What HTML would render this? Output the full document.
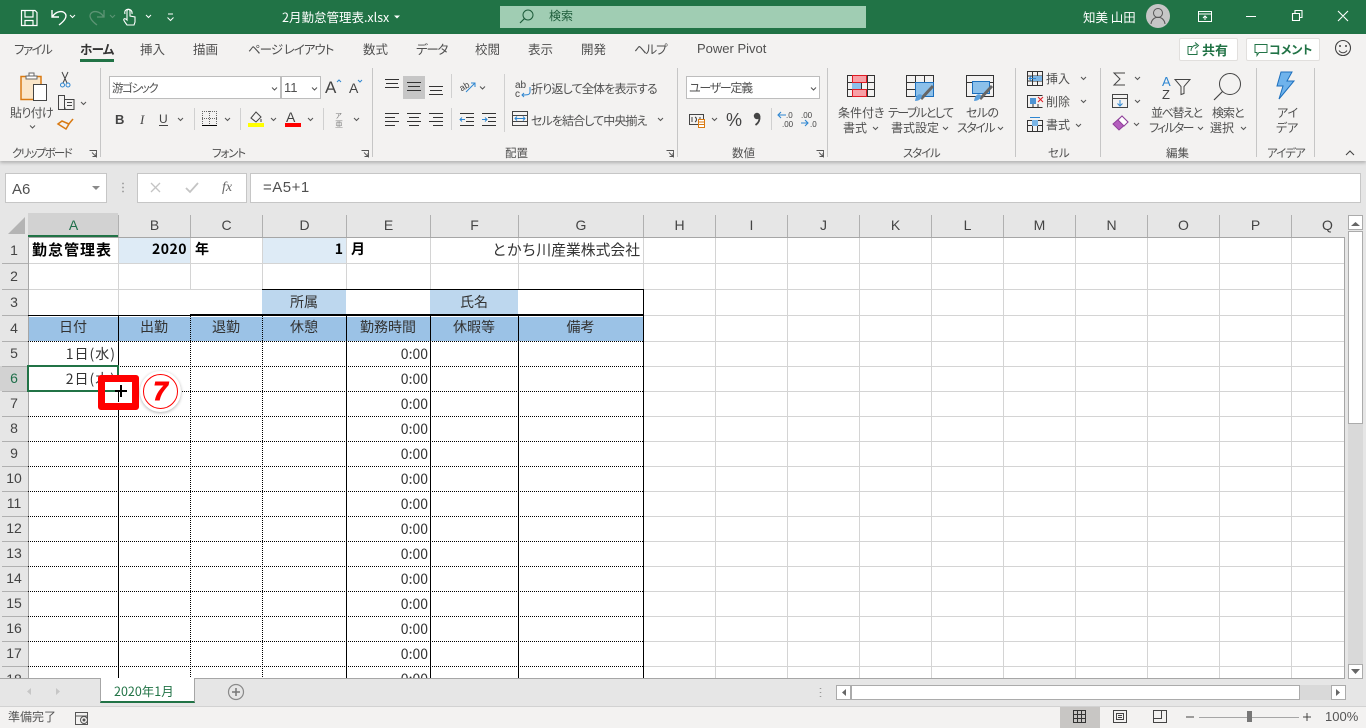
<!DOCTYPE html>
<html lang="ja"><head><meta charset="utf-8"><title>2月勤怠管理表.xlsx</title>
<style>
*{box-sizing:border-box}
html,body{margin:0;padding:0;width:1366px;height:728px;overflow:hidden;background:#e6e6e6}
body{position:relative;font-family:"Liberation Sans","Noto Sans CJK JP",sans-serif;color:#444}
.a{position:absolute}
.t{position:absolute;white-space:nowrap;font-family:"Noto Sans CJK JP",sans-serif;font-feature-settings:"palt";font-size:12px;line-height:16px;color:#505050}
.c{position:absolute;white-space:nowrap;font-family:"Noto Sans CJK JP",sans-serif;font-size:14px;line-height:25px;color:#333;padding:0 2px}
.r{text-align:right}.m{text-align:center}.b{font-weight:700;color:#000}
.ch{position:absolute;top:213px;height:24px;line-height:25px;text-align:center;font-size:14px;color:#444;font-family:"Liberation Sans",sans-serif;padding-left:1px}
.rh{position:absolute;left:0;width:28px;text-align:center;font-size:14px;color:#444;font-family:"Liberation Sans",sans-serif}
svg{position:absolute;left:0;top:0;overflow:visible}
</style></head><body>

<!-- title bar -->
<div class="a" style="left:0;top:0;width:1366px;height:34px;background:#217346"></div>
<div class="t" style="left:282px;top:9px;color:#fff;font-size:12.5px;font-feature-settings:normal">2月勤怠管理表.xlsx</div>
<div class="a" style="left:500px;top:6px;width:366px;height:22px;background:#a0cdb3"></div>
<div class="t" style="left:549px;top:8px;color:#1d5c3a;font-size:12px">検索</div>
<div class="t" style="left:1083px;top:9px;color:#fff;font-size:12.5px">知美 山田</div>

<!-- ribbon -->
<div class="a" style="left:0;top:34px;width:1366px;height:127px;background:#f3f2f1;box-shadow:0 2px 3px rgba(0,0,0,.22)"></div>

<div class="t" style="left:14px;top:41px;font-size:12.5px;letter-spacing:-1.5px">ファイル</div>
<div class="t" style="left:80px;top:41px;font-size:12.5px;font-weight:700;color:#333;letter-spacing:-.7px">ホーム</div>
<div class="a" style="left:80px;top:59px;width:34px;height:3px;background:#217346"></div>
<div class="t" style="left:140px;top:41px;font-size:12.5px">挿入</div>
<div class="t" style="left:193px;top:41px;font-size:12.5px">描画</div>
<div class="t" style="left:248px;top:41px;font-size:12.5px;letter-spacing:-1px">ページ レイアウト</div>
<div class="t" style="left:363px;top:41px;font-size:12.5px">数式</div>
<div class="t" style="left:416px;top:41px;font-size:12.5px;letter-spacing:-1.3px">データ</div>
<div class="t" style="left:475px;top:41px;font-size:12.5px">校閲</div>
<div class="t" style="left:528px;top:41px;font-size:12.5px">表示</div>
<div class="t" style="left:581px;top:41px;font-size:12.5px">開発</div>
<div class="t" style="left:634px;top:41px;font-size:12.5px;letter-spacing:-1.2px">ヘルプ</div>
<div class="t" style="left:697px;top:41px;font-size:13px;font-family:'Liberation Sans',sans-serif">Power Pivot</div>

<div class="a" style="left:1179px;top:38px;width:59px;height:23px;background:#fff;border:1px solid #e1dfdd;border-radius:2px"></div>
<div class="t" style="left:1202px;top:42px;font-weight:700;font-size:13px;color:#217346">共有</div>
<div class="a" style="left:1246px;top:38px;width:74px;height:23px;background:#fff;border:1px solid #e1dfdd;border-radius:2px"></div>
<div class="t" style="left:1269px;top:42px;font-weight:700;color:#217346">コメント</div>

<!-- ribbon boxes -->
<div class="a" style="left:109px;top:76px;width:172px;height:23px;background:#fff;border:1px solid #bdbdbd"></div>
<div class="a" style="left:281px;top:76px;width:40px;height:23px;background:#fff;border:1px solid #bdbdbd"></div>
<div class="a" style="left:686px;top:76px;width:134px;height:23px;background:#fff;border:1px solid #bdbdbd"></div>
<div class="a" style="left:403px;top:76px;width:22px;height:23px;background:#c6c6c6"></div>
<div class="t" style="left:112px;top:80px;font-size:11.5px;letter-spacing:-1.4px">游ゴシック</div>
<div class="t" style="left:284px;top:80px;font-size:13px;font-family:'Liberation Sans',sans-serif">11</div>
<div class="t" style="left:689px;top:80px;font-size:12px;letter-spacing:-1.3px">ユーザー定義</div>

<div class="t" style="left:10px;top:105px;letter-spacing:-.7px">貼り付け</div>
<div class="t" style="left:531px;top:81px;font-size:12px;letter-spacing:-.8px">折り返して全体を表示する</div>
<div class="t" style="left:531px;top:113px;font-size:12px;letter-spacing:-.9px">セルを結合して中央揃え</div>
<div class="t" style="left:838px;top:105px">条件付き</div>
<div class="t" style="left:843px;top:120px">書式</div>
<div class="t" style="left:888px;top:105px;letter-spacing:-1.5px">テーブルとして</div>
<div class="t" style="left:891px;top:120px">書式設定</div>
<div class="t" style="left:966px;top:105px;letter-spacing:-.6px">セルの</div>
<div class="t" style="left:957px;top:120px;letter-spacing:-1.5px">スタイル</div>
<div class="t" style="left:1046px;top:71px">挿入</div>
<div class="t" style="left:1046px;top:94px">削除</div>
<div class="t" style="left:1046px;top:117px">書式</div>
<div class="t" style="left:1151px;top:105px;letter-spacing:-1.4px">並べ替えと</div>
<div class="t" style="left:1149px;top:120px;letter-spacing:-1.8px">フィルター</div>
<div class="t" style="left:1212px;top:105px;letter-spacing:-1px">検索と</div>
<div class="t" style="left:1210px;top:120px">選択</div>
<div class="t" style="left:1277px;top:105px">アイ</div>
<div class="t" style="left:1276px;top:120px">デア</div>

<div class="t" style="left:12px;top:145px;font-size:11.5px;letter-spacing:-1.7px">クリップボード</div>
<div class="t" style="left:212px;top:145px;font-size:11.5px;letter-spacing:-1.2px">フォント</div>
<div class="t" style="left:505px;top:145px;font-size:11.5px">配置</div>
<div class="t" style="left:732px;top:145px;font-size:11.5px">数値</div>
<div class="t" style="left:903px;top:145px;font-size:11.5px;letter-spacing:-1.2px">スタイル</div>
<div class="t" style="left:1048px;top:145px;font-size:11.5px">セル</div>
<div class="t" style="left:1166px;top:145px;font-size:11.5px">編集</div>
<div class="t" style="left:1267px;top:145px;font-size:11.5px;letter-spacing:-1px">アイデア</div>

<!-- formula bar -->
<div class="a" style="left:5px;top:173px;width:102px;height:30px;background:#fff;border:1px solid #c6c6c6"></div>
<div class="t" style="left:12px;top:182px;font-size:15px;font-family:'Liberation Sans',sans-serif">A6</div>
<div class="a" style="left:137px;top:173px;width:110px;height:30px;background:#fff;border:1px solid #c6c6c6"></div>
<div class="a" style="left:250px;top:173px;width:1111px;height:30px;background:#fff;border:1px solid #c6c6c6"></div>
<div class="t" style="left:263px;top:180px;font-size:15px;font-family:'Liberation Sans',sans-serif;letter-spacing:.5px">=A5+1</div>

<!-- sheet -->
<div class="a" style="left:0;top:213px;width:1345px;height:465px;background:#e6e6e6"></div>
<div class="a" style="left:28px;top:213px;width:90px;height:24px;background:#d2d2d2"></div>
<div class="a" style="left:0;top:366px;width:28px;height:25px;background:#d2d2d2"></div>
<div class="a" style="left:28px;top:237px;width:1316px;height:441px;background:#fff"></div>
<div class="a" style="left:118px;top:237px;width:72px;height:26px;background:#deebf6"></div>
<div class="a" style="left:262px;top:237px;width:84px;height:26px;background:#deebf6"></div>
<div class="a" style="left:262px;top:290px;width:84px;height:25px;background:#bdd7ee"></div>
<div class="a" style="left:430px;top:290px;width:88px;height:25px;background:#bdd7ee"></div>
<div class="a" style="left:28px;top:317px;width:615px;height:24px;background:#9bc2e6"></div>

<svg width="1366" height="728" shape-rendering="crispEdges">
<g stroke="#d4d4d4" stroke-width="1">
<path d="M28.500 263.500H1344M28.500 289.500H1344M644 315.500H1344M644 341.500H1344M644 366.500H1344M644 391.500H1344M644 416.500H1344M644 441.500H1344M644 466.500H1344M644 491.500H1344M644 516.500H1344M644 541.500H1344M644 566.500H1344M644 591.500H1344M644 616.500H1344M644 641.500H1344M644 666.500H1344"/>
<path d="M118.500 237V315M190.500 237V290M262.500 237V290M346.500 237V290M430.500 237V290M518.500 237V290M643.500 237V290M715.500 237V678M787.500 237V678M859.500 237V678M931.500 237V678M1003.500 237V678M1075.500 237V678M1147.500 237V678M1219.500 237V678M1291.500 237V678"/>
</g>
<!-- header dividers -->
<g stroke="#b0b0b0" stroke-width="1">
<path d="M118.500 215V237M190.500 215V237M262.500 215V237M346.500 215V237M430.500 215V237M518.500 215V237M643.500 215V237M715.500 215V237M787.500 215V237M859.500 215V237M931.500 215V237M1003.500 215V237M1075.500 215V237M1147.500 215V237M1219.500 215V237M1291.500 215V237"/>
<path d="M2 263.500H28M2 289.500H28M2 315.500H28M2 341.500H28M2 366.500H28M2 391.500H28M2 416.500H28M2 441.500H28M2 466.500H28M2 491.500H28M2 516.500H28M2 541.500H28M2 566.500H28M2 591.500H28M2 616.500H28M2 641.500H28M2 666.500H28"/>
</g>
<path d="M28 237.500H1345M28.500 237V678M1344.500 237V678" stroke="#a6a6a6" fill="none"/>
<path d="M28 236H118" stroke="#217346" stroke-width="2"/>
<path d="M25 217V234H8Z" fill="#b4b4b4" shape-rendering="auto"/>
<!-- black table borders -->
<g stroke="#000" stroke-width="1" fill="none">
<path d="M262 289.500H644M190 314.500H644M28 315.500H644M118.500 316V678M346.500 316V678M430.500 316V678M518.500 316V678M643.500 289V678"/>
<g stroke-dasharray="1 1">
<path d="M190.500 316V678M262.500 316V678"/>
<path d="M28 341.500H644M28 366.500H644M28 391.500H644M28 416.500H644M28 441.500H644M28 466.500H644M28 491.500H644M28 516.500H644M28 541.500H644M28 566.500H644M28 591.500H644M28 616.500H644M28 641.500H644M28 666.500H644"/>
</g>
</g>
</svg>

<!-- headers -->
<div class="ch" style="left:28px;width:90px;color:#1f6f4a">A</div>
<div class="ch" style="left:118px;width:72px">B</div>
<div class="ch" style="left:190px;width:72px">C</div>
<div class="ch" style="left:262px;width:84px">D</div>
<div class="ch" style="left:346px;width:84px">E</div>
<div class="ch" style="left:430px;width:88px">F</div>
<div class="ch" style="left:518px;width:125px">G</div>
<div class="ch" style="left:643px;width:72px">H</div>
<div class="ch" style="left:715px;width:72px">I</div>
<div class="ch" style="left:787px;width:72px">J</div>
<div class="ch" style="left:859px;width:72px">K</div>
<div class="ch" style="left:931px;width:72px">L</div>
<div class="ch" style="left:1003px;width:72px">M</div>
<div class="ch" style="left:1075px;width:72px">N</div>
<div class="ch" style="left:1147px;width:72px">O</div>
<div class="ch" style="left:1219px;width:72px">P</div>
<div class="ch" style="left:1291px;width:72px">Q</div>

<div class="rh" style="top:238px;line-height:25px">1</div>
<div class="rh" style="top:264px;line-height:25px">2</div>
<div class="rh" style="top:290px;line-height:25px">3</div>
<div class="rh" style="top:316px;line-height:25px">4</div>
<div class="rh" style="top:341px;line-height:25px">5</div>
<div class="rh" style="top:366px;line-height:25px;color:#1f6f4a">6</div>
<div class="rh" style="top:391px;line-height:25px">7</div>
<div class="rh" style="top:416px;line-height:25px">8</div>
<div class="rh" style="top:441px;line-height:25px">9</div>
<div class="rh" style="top:466px;line-height:25px">10</div>
<div class="rh" style="top:491px;line-height:25px">11</div>
<div class="rh" style="top:516px;line-height:25px">12</div>
<div class="rh" style="top:541px;line-height:25px">13</div>
<div class="rh" style="top:566px;line-height:25px">14</div>
<div class="rh" style="top:591px;line-height:25px">15</div>
<div class="rh" style="top:616px;line-height:25px">16</div>
<div class="rh" style="top:641px;line-height:25px">17</div>
<div class="a" style="left:0;top:666px;width:28px;height:12px;overflow:hidden"><div class="rh" style="top:1px;line-height:25px">18</div></div>

<!-- cells -->
<div class="c b" style="left:30px;top:237px;font-size:15px;letter-spacing:1px">勤怠管理表</div>
<div class="c r b" style="left:118px;top:237px;width:72px;padding-right:3px;letter-spacing:.5px">2020</div>
<div class="c b" style="left:193px;top:237px">年</div>
<div class="c r b" style="left:262px;top:237px;width:84px;padding-right:3px">1</div>
<div class="c b" style="left:349px;top:237px">月</div>
<div class="c r" style="left:430px;top:237px;width:213px;font-size:14.8px;padding-right:3px">とかち川産業株式会社</div>
<div class="c m" style="left:262px;top:290px;width:84px">所属</div>
<div class="c m" style="left:430px;top:290px;width:88px">氏名</div>
<div class="c m" style="left:28px;top:315px;width:90px">日付</div>
<div class="c m" style="left:118px;top:315px;width:72px">出勤</div>
<div class="c m" style="left:190px;top:315px;width:72px">退勤</div>
<div class="c m" style="left:262px;top:315px;width:84px">休憩</div>
<div class="c m" style="left:346px;top:315px;width:84px">勤務時間</div>
<div class="c m" style="left:430px;top:315px;width:88px">休暇等</div>
<div class="c m" style="left:518px;top:315px;width:125px">備考</div>
<div class="c r" style="left:28px;top:342px;width:90px;letter-spacing:1px">1日(水)</div>
<div class="c r" style="left:28px;top:367px;width:90px;letter-spacing:1px">2日(木)</div>
<div class="c r" style="left:346px;top:342px;width:84px">0:00</div>
<div class="c r" style="left:346px;top:367px;width:84px">0:00</div>
<div class="c r" style="left:346px;top:392px;width:84px">0:00</div>
<div class="c r" style="left:346px;top:417px;width:84px">0:00</div>
<div class="c r" style="left:346px;top:442px;width:84px">0:00</div>
<div class="c r" style="left:346px;top:467px;width:84px">0:00</div>
<div class="c r" style="left:346px;top:492px;width:84px">0:00</div>
<div class="c r" style="left:346px;top:517px;width:84px">0:00</div>
<div class="c r" style="left:346px;top:542px;width:84px">0:00</div>
<div class="c r" style="left:346px;top:567px;width:84px">0:00</div>
<div class="c r" style="left:346px;top:592px;width:84px">0:00</div>
<div class="c r" style="left:346px;top:617px;width:84px">0:00</div>
<div class="c r" style="left:346px;top:642px;width:84px">0:00</div>
<div class="c r" style="left:346px;top:667px;width:84px;height:11px;overflow:hidden">0:00</div>

<!-- selection & callout -->
<div class="a" style="left:27px;top:365px;width:92px;height:27px;border:2px solid #217346"></div>
<div class="a" style="left:98px;top:375px;width:41px;height:35px;background:#fff;border:7px solid #f00;border-radius:3px"></div>
<div class="a" style="left:105px;top:390px;width:14px;height:2px;background:#217346"></div>
<div class="a" style="left:118px;top:392px;width:1px;height:10px;background:#000"></div>
<div class="a" style="left:115px;top:390px;width:12px;height:2px;background:#000"></div>
<div class="a" style="left:120px;top:385px;width:2px;height:12px;background:#000"></div>
<div class="a" style="left:140px;top:371px;width:41px;height:41px;background:#fff;border-radius:50%;box-shadow:0 1px 3px rgba(0,0,0,.3)"></div>
<div class="a" style="left:143px;top:374px;width:35px;height:35px;border:1.5px solid #f00;border-radius:50%"></div>
<div class="a" style="left:143px;top:374px;width:35px;height:35px;text-align:center;line-height:35px;font-family:'Liberation Sans',sans-serif;font-weight:700;font-style:italic;font-size:26px;color:#f00;-webkit-text-stroke:1px #f00">7</div>

<!-- scrollbars -->
<div class="a" style="left:1345px;top:213px;width:21px;height:465px;background:#e6e6e6"></div>
<div class="a" style="left:1348px;top:424px;width:15px;height:240px;background:#d9d9d9"></div>
<div class="a" style="left:1348px;top:215px;width:15px;height:15px;background:#fff;border:1px solid #ababab"></div>
<div class="a" style="left:1348px;top:231px;width:15px;height:193px;background:#fff;border:1px solid #ababab"></div>
<div class="a" style="left:1348px;top:664px;width:15px;height:15px;background:#fff;border:1px solid #ababab"></div>

<!-- tabs -->
<div class="a" style="left:0;top:678px;width:1345px;height:28px;background:#e6e6e6;border-top:1px solid #a6a6a6"></div>
<div class="a" style="left:100px;top:678px;width:95px;height:25px;background:#fff;border-left:1px solid #a6a6a6;border-right:1px solid #a6a6a6;border-bottom:2px solid #217346"></div>
<div class="t" style="left:114px;top:683px;font-size:12.5px;color:#217346;font-feature-settings:normal">2020年1月</div>
<div class="a" style="left:851px;top:685px;width:449px;height:15px;background:#fff;border:1px solid #ababab"></div>
<div class="a" style="left:1300px;top:685px;width:31px;height:15px;background:#d9d9d9"></div>
<div class="a" style="left:836px;top:685px;width:15px;height:15px;background:#fff;border:1px solid #ababab"></div>
<div class="a" style="left:1331px;top:685px;width:15px;height:15px;background:#fff;border:1px solid #ababab"></div>

<!-- status -->
<div class="a" style="left:0;top:706px;width:1366px;height:22px;background:#f3f2f1;border-top:1px solid #d2d2d2"></div>
<div class="a" style="left:1060px;top:707px;width:40px;height:21px;background:#c8c6c4"></div>
<div class="t" style="left:8px;top:709px;font-size:12px;color:#555;font-feature-settings:normal">準備完了</div>
<div class="t" style="left:1325px;top:709px;font-size:13px;color:#555;font-family:'Liberation Sans',sans-serif">100%</div>

<!-- icons -->
<svg width="1366" height="728" fill="none">
<!-- title bar -->
<g stroke="#fff" stroke-width="1.200">
<path d="M21.500 10.500H35l2 2v13H21.500ZM25 10.500V17H33V10.500M25 25.500V20.500H33V25.500"/>
<path d="M52 10V17H59M52.500 16.500C56 11 63 10 65.500 14C67.500 18 63 22 59 25" stroke-width="1.400"/>
<path d="M70 15l2.500 2.500 2.500-2.500M146 15l2.500 2.500 2.500-2.500" stroke-width="1"/>
<path d="M127 25c-2-3-4-5-3-6 1-1 3 1 3 1V11c0-2 3-2 3 0v5l5 1v5l-1 3ZM125 14c-2-6 8-7 7 0" stroke-width="1.100"/>
<path d="M168 14h5M167.500 17.500l3 3 3-3" stroke-width="1"/>
<path d="M1198.500 11.500H1211.500V21.500H1198.500ZM1198.500 14H1211.500M1205 20V16M1203 18l2-2 2 2" stroke-width="1"/>
<path d="M1246 16.500h10M1292.500 13.500h7v7h-7ZM1295 13v-2.500h7v7h-2.500M1338 11l10 10M1348 11l-10 10" stroke-width="1.100"/>
</g>
<path d="M394 15.500h6l-3 3Z" fill="#fff"/>
<path d="M104 10v7h-7M103.500 16.500C100 11 93 10 90.500 14C88.500 18 93 22 97 25" stroke="#5c9474" stroke-width="1.300"/>
<path d="M110 15l2.500 2.500 2.500-2.500" stroke="#5c9474"/>
<circle cx="528" cy="15" r="5" stroke="#1d5c3a"/><path d="M524.500 18.500L520 23" stroke="#1d5c3a" stroke-width="1.200"/>
<circle cx="1158" cy="16" r="12" fill="#c6c6c6"/><circle cx="1158" cy="13" r="4.500" stroke="#555"/><path d="M1151 24c1-9 13-9 14 0" stroke="#555"/>
<!-- share / comment / smile -->
<path d="M1188 54.500V46.500h4M1188 54.500h9v-4M1191 51c0-4 3-6 6-6M1195 42.500l3.500 3-3.500 3" stroke="#217346"/>
<path d="M1255 44.500h12v8h-8l-2 3v-3h-2Z" stroke="#217346"/>
<circle cx="1343" cy="48" r="7.500" stroke="#444" stroke-width="1.100"/><circle cx="1340" cy="46" r="1" fill="#444"/><circle cx="1346" cy="46" r="1" fill="#444"/><path d="M1339 50.500c2 3 6 3 8 0" stroke="#444"/>
<!-- separators -->
<path d="M100.500 68V157M372.500 68V157M677.500 68V157M827.500 68V157M1015.500 68V157M1100.500 68V157M1256.500 68V157M1314.500 68V157" stroke="#c6c6c6"/>
<path d="M194.500 108V130M240.500 108V130M323.500 108V130M451.500 74V98M451.500 108V130M504.500 74V132M771.500 108V130" stroke="#d0d0d0"/>
<!-- clipboard -->
<path d="M21 76.500h20v23H21Z" fill="#fbe6c8" stroke="#d97a12" stroke-width="1.500"/><path d="M26 76h11v3H26Zm3-3h5v3h-5Z" fill="#fff" stroke="#666"/><path d="M33.500 84.500h13v16h-13Z" fill="#fff" stroke="#444"/>
<path d="M62 72l5 11M68 72l-5 11" stroke="#444"/><circle cx="62.500" cy="85" r="2" stroke="#2e86d1"/><circle cx="68" cy="85" r="2" stroke="#2e86d1"/>
<path d="M58.500 95.500h6v14h-6ZM65 99.500h9v10h-9v-2" stroke="#444" fill="#f3f2f1"/><path d="M67 102.500h5M67 105.500h5" stroke="#444"/>
<path d="M58 124l8 5 3-5-7-3ZM68 125l5-6" stroke="#d97a12" stroke-width="1.500"/>
<path d="M30 125.500l2.500 2.500 2.500-2.500M81 102l2.500 2.500 2.500-2.500M272 87.500l2.500 2.500 2.500-2.500M312 87.500l2.500 2.500 2.500-2.500M178 118l2.500 2.500 2.500-2.500M225 118l2.500 2.500 2.500-2.500M271 118l2.500 2.500 2.500-2.500M308 118l2.500 2.500 2.500-2.500M354 118l2.500 2.500 2.500-2.500M480 86.500l2.500 2.500 2.500-2.500M658 118l2.500 2.500 2.500-2.500M811 87.500l2.500 2.500 2.500-2.500M712 118l2.500 2.500 2.500-2.500M873 127l2.500 2.500 2.500-2.500M943 127l2.500 2.500 2.500-2.500M998 127l2.500 2.500 2.500-2.500M1081 77l2.500 2.500 2.500-2.500M1081 100l2.500 2.500 2.500-2.500M1076 124l2.500 2.500 2.500-2.500M1135 77l2.500 2.500 2.500-2.500M1135 100l2.500 2.500 2.500-2.500M1134 123l2.500 2.500 2.500-2.500M1198 127l2.500 2.500 2.500-2.500M1241 127l2.500 2.500 2.500-2.500" stroke="#555"/>
<path d="M1346 155l4-4 4 4" stroke="#444" stroke-width="1.100"/>
<!-- dialog launchers -->
<path d="M89.500 150.500h7v7M92 152.500l4 4M96 153v3.500h-3.500M361.500 150.500h7v7M364 152.500l4 4M368 153v3.500h-3.500M666.500 150.500h7v7M669 152.500l4 4M673 153v3.500h-3.500M816.500 150.500h7v7M819 152.500l4 4M823 153v3.500h-3.500" stroke="#555" stroke-width=".9"/>
<!-- font -->
<text x="325" y="93" font-family="Liberation Sans" font-size="17" fill="#444">A</text>
<text x="349" y="93" font-family="Liberation Sans" font-size="14" fill="#444">A</text>
<path d="M337 82l2-2 2 2" stroke="#2e86d1"/><path d="M358 80l2 2 2-2" stroke="#2e86d1"/>
<text x="115" y="124" font-family="Liberation Sans" font-size="13" font-weight="700" fill="#444">B</text>
<text x="140" y="124" font-family="Liberation Serif" font-size="13" font-style="italic" fill="#444">I</text>
<text x="159" y="123" font-family="Liberation Sans" font-size="12" fill="#444">U</text>
<path d="M159 125.500h9" stroke="#444"/>
<path d="M202 111.500h15M202 118.500h15M209.500 111v14M202.500 111v14M216.500 111v14" stroke="#666" stroke-dasharray="1 1"/><path d="M202 125.500h15" stroke="#000"/>
<path d="M251 118l5-6 5 5-5 5ZM261 119v3" stroke="#444"/><rect x="248" y="123" width="16" height="4" fill="#ff0"/>
<text x="286" y="122" font-family="Liberation Sans" font-size="14" fill="#444">A</text><rect x="285" y="123" width="16" height="4" fill="#f00"/>
<text x="335" y="118" font-family="Noto Sans CJK JP" font-size="7" fill="#777">ア</text><text x="335" y="127" font-family="Noto Sans CJK JP" font-size="8" fill="#888">亜</text>
<!-- alignment -->
<path d="M385 79.500h14M386 83.500h12M385 87.500h14M407 82.500h14M408 86.500h12M407 90.500h14M429 86.500h14M430 90.500h12M429 94.500h14" stroke="#333"/>
<path d="M385 113.500h14M385 117.500h10M385 121.500h14M385 125.500h10M407 113.500h14M409 117.500h10M407 121.500h14M409 125.500h10M429 113.500h14M433 117.500h10M429 121.500h14M433 125.500h10" stroke="#333"/>
<path d="M460 113.500h14M466 117.500h8M466 121.500h8M460 125.500h14M482 113.500h14M488 117.500h8M488 121.500h8M482 125.500h14" stroke="#333"/>
<path d="M460 119.500h5M462 117.500l-2 2 2 2M482 119.500h5M485 117.500l2 2-2 2" stroke="#2e86d1"/>
<path d="M466 92l9-9M471 83h4v4" stroke="#2e86d1"/><text x="459" y="90" font-family="Liberation Sans" font-size="9" fill="#444" transform="rotate(-30 463 86)">ab</text>
<text x="515" y="88" font-family="Liberation Sans" font-size="10" fill="#444">ab</text><text x="515" y="97" font-family="Liberation Sans" font-size="10" fill="#444">c</text>
<path d="M530 87v5c0 3-3 3-8 3M524 93l-2 2 2 2" stroke="#2e86d1"/>
<path d="M512.500 111.500h15v14h-15ZM512.500 115.500h15M512.500 121.500h15" stroke="#444"/><path d="M515 118.500h10M517 116.500l-2 2 2 2M523 116.500l2 2-2 2" stroke="#2e86d1"/>
<!-- number -->
<path d="M689.500 114.500h14v10h-14ZM692 117v5M695 117c2 1 2 4 0 5M700 117v5" stroke="#444"/><path d="M698.500 119.500h6v8h-6ZM698.500 122h6M698.500 124.500h6" stroke="#d97a12" fill="#fff"/>
<text x="726" y="126" font-family="Liberation Sans" font-size="18" fill="#444">%</text>
<circle cx="757" cy="116" r="3.200" fill="#444"/><path d="M759.500 116c.5 4-1 7-4 9" stroke="#444" stroke-width="1.800"/>
<path d="M786 115h-7M781 112l-3 3 3 3M801 123h7M805 120l3 3-3 3" stroke="#2e86d1" stroke-width="1.100"/>
<text x="786" y="118" font-family="Liberation Sans" font-size="8" fill="#444">.0</text><text x="782" y="127" font-family="Liberation Sans" font-size="8" fill="#444">.00</text>
<text x="801" y="118" font-family="Liberation Sans" font-size="8" fill="#444">.00</text><text x="810" y="127" font-family="Liberation Sans" font-size="8" fill="#444">.0</text>
<!-- styles -->
<path d="M847.500 75.500h27v21h-27ZM847.500 82.500h27M847.500 89.500h27M854.500 75.500v21M861.500 75.500v21M867.500 75.500v21" stroke="#333"/>
<path d="M852.500 75.500h14v7h-14ZM852.500 89.500h14v7h-14Z" fill="#f8a0a6" stroke="#e01b24"/><rect x="852" y="83" width="9" height="6" fill="#8cc0ea"/>
<path d="M906.500 75.500h27v21h-27ZM906.500 82.500h27M906.500 89.500h27M915.500 75.500v21M924.500 75.500v21" stroke="#333"/><path d="M915.500 82.500h18v14h-18Z" fill="#8cc0ea" stroke="#1c6fbd"/>
<path d="M966.500 75.500h27v21h-27ZM966.500 82.500h27" stroke="#333"/><path d="M972.500 81.500h17v12h-17Z" fill="#8cc0ea" stroke="#1c6fbd"/>
<path d="M921 99l12-13" stroke="#666" stroke-width="3"/><path d="M980 99l12-13" stroke="#666" stroke-width="3"/>
<path d="M915 101c4 0 7-2 7-6-3-2-6 0-7 6ZM974 101c4 0 7-2 7-6-3-2-6 0-7 6Z" fill="#5a9fdc"/>
<!-- cells -->
<path d="M1027.500 71.500h15v14h-15ZM1027.500 76h15M1027.500 81h15M1032.500 71.500v14M1037.500 71.500v14" stroke="#333"/><path d="M1033 76h9v5h-9Z" fill="#7ab5e6"/><path d="M1030 78.500h6M1032 76l-3 2.500 3 2.500" stroke="#2e86d1"/>
<path d="M1027.500 95.500h15M1027.500 107.500h15M1027.500 95v13M1033 108v-4M1038 108v-4" stroke="#333"/><rect x="1030" y="98" width="6" height="6" fill="#4f94d4"/><path d="M1038 97l5 5M1043 97l-5 5" stroke="#e01b24"/>
<path d="M1027.500 120.500h15v11h-15ZM1027.500 125.500h15M1032.500 120.500v11M1037.500 120.500v11" stroke="#333"/><rect x="1032" y="120" width="6" height="6" fill="#7ab5e6"/><path d="M1030 117.500h10" stroke="#2e86d1"/>
<!-- edit -->
<path d="M1125 73h-11l6 6-6 6h11" stroke="#444"/>
<path d="M1112.500 94.500h15v13h-15ZM1112.500 98.500h15" stroke="#444"/><path d="M1120 100v6M1117.500 103.500l2.500 2.500 2.500-2.500" stroke="#2e86d1"/>
<path d="M1113 124l9-8 6 6-9 8Z" fill="#b45fbe" stroke="#8f3f9a"/><path d="M1118 120l6 6 4-4-6-6Z" fill="#fff" stroke="#8f3f9a"/>
<text x="1162" y="86" font-family="Liberation Sans" font-size="13" fill="#2e86d1">A</text><text x="1162" y="99" font-family="Liberation Sans" font-size="13" fill="#444">Z</text>
<path d="M1175 79.500h15l-6 7v7l-3 1v-8Z" stroke="#444"/>
<circle cx="1230" cy="84" r="10.500" stroke="#444"/><path d="M1222.500 91.500L1214 100" stroke="#444" stroke-width="1.200"/>
<!-- ideas -->
<path d="M1281 72h11l-5 9h7l-15 18 4-13h-6Z" fill="#6fb3ec" stroke="#1c6fbd"/>
<!-- formula bar -->
<path d="M92 186h8l-4 4Z" fill="#8a8a8a"/>
<path d="M122 183.500h2M122 187.500h2M122 191.500h2" stroke="#a6a6a6" stroke-width="1.500"/>
<path d="M151 183l9 9M160 183l-9 9" stroke="#c4c4c4" stroke-width="1.300"/>
<path d="M186 188l4 4 8-9" stroke="#c4c4c4" stroke-width="1.800"/>
<text x="222" y="191" font-family="Liberation Serif" font-size="14" font-style="italic" fill="#666">fx</text>
<!-- scroll arrows -->
<path d="M1351 226l4.500-4 4.500 4Z" fill="#666"/>
<path d="M1351 669l4.500 5 4.500-5Z" fill="#666"/>
<path d="M846 689v7l-4-3.500ZM1336 689v7l4-3.500Z" fill="#666"/>
<path d="M31 688v7l-4-3.500ZM56 688v7l4-3.500Z" fill="#c6c6c6"/>
<circle cx="236" cy="692" r="7.500" stroke="#8a8a8a" stroke-width="1.200"/><path d="M232 692h8M236 688v8" stroke="#777" stroke-width="1.500"/>
<path d="M820.500 688v1M820.500 692v1M820.500 696v1" stroke="#999" stroke-width="1.500"/>
<!-- status icons -->
<path d="M75.500 712.500h12v12h-12ZM75.500 716h12" stroke="#555"/><circle cx="84" cy="720" r="3.500" fill="#f3f2f1" stroke="#555"/><circle cx="84" cy="720" r="1.500" fill="#555"/>
<path d="M1073.500 710.500h12v12h-12ZM1073.500 714.500h12M1073.500 718.500h12M1077.500 710.500v12M1081.500 710.500v12" stroke="#333"/>
<path d="M1113.500 710.500h13v12h-13ZM1116.500 713.500h7v6h-7ZM1118 715.500h4M1118 717.500h4" stroke="#444"/>
<path d="M1153.500 710.500h13v12h-13ZM1153.500 718.500h8v-8" stroke="#444"/>
<path d="M1186 717h8M1303 717h8M1307 713v8" stroke="#444"/>
<path d="M1199 717.500h100" stroke="#a6a6a6"/>
<rect x="1247" y="711" width="5" height="11" fill="#777"/>
</svg>
</body></html>
